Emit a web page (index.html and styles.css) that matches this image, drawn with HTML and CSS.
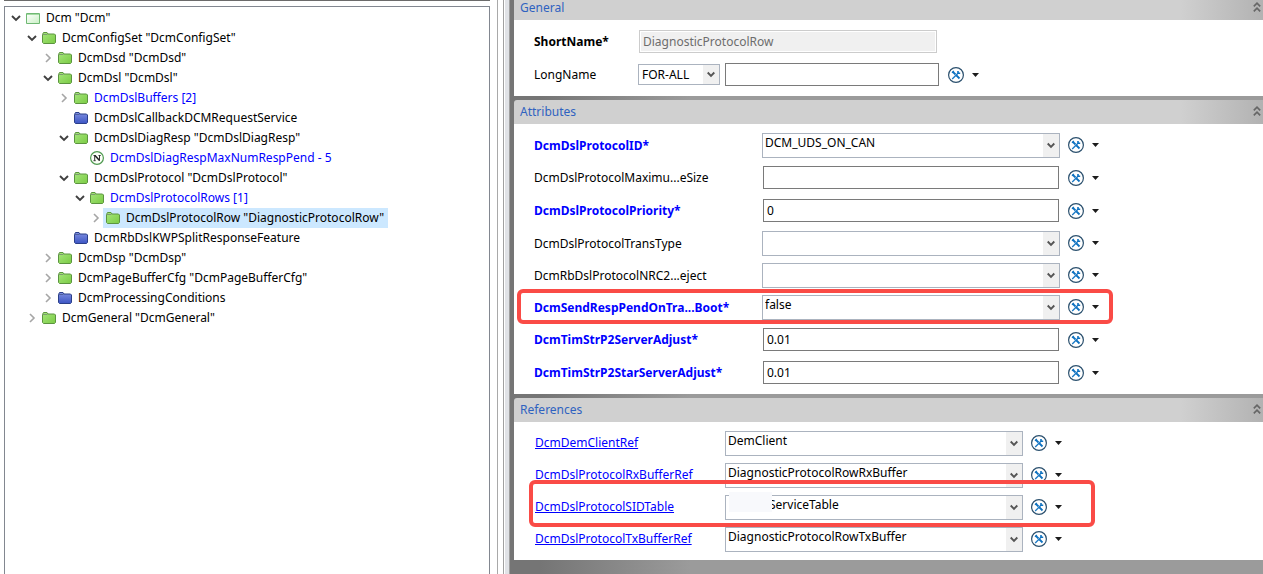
FILE: index.html
```html
<!DOCTYPE html>
<html lang="en">
<head>
<meta charset="utf-8">
<title>Dcm</title>
<link rel="stylesheet" href="styles.css">
</head>
<body>
<svg class="sprite" aria-hidden="true">
  <defs>
    <linearGradient id="green" x1="0" y1="0" x2="1" y2="1"><stop offset="0" stop-color="#a6e67c"/><stop offset="1" stop-color="#7bcb45"/></linearGradient>
    <linearGradient id="blue" x1="0" y1="0" x2="0" y2="1"><stop offset="0" stop-color="#7f8fe0"/><stop offset="1" stop-color="#3c55c4"/></linearGradient>
    <linearGradient id="pale" x1="0" y1="0" x2="1" y2="1"><stop offset="0" stop-color="#ffffff"/><stop offset="1" stop-color="#c9f0c4"/></linearGradient>
  </defs>
  <symbol id="i-green" viewBox="0 0 14 12"><path d="M.5 10.500V2.500L1.500.5H5l1 1.500h6.500l1 1v7.500l-1 1h-11z" fill="url(#green)" stroke="#5c9440"/><path d="M1 2.500h4.500" stroke="#7d9a70"/></symbol>
  <symbol id="i-blue" viewBox="0 0 14 12"><path d="M.5 10.500V2.500L1.500.5H5l1 1.500h6.500l1 1v7.500l-1 1h-11z" fill="url(#blue)" stroke="#2b3f88"/><path d="M1 2.500h4.500" stroke="#4f5f9c"/></symbol>
  <symbol id="i-root" viewBox="0 0 14 12"><path d="M.5 1.500h13v10H.5z" fill="url(#pale)" stroke="#6fb873"/><path d="M1 2.500h12" stroke="#a5dca4"/></symbol>
  <symbol id="i-n" viewBox="0 0 14 14"><circle cx="7" cy="7" r="6.400" fill="#fbfff8" stroke="#4f9a50" stroke-width="1.200"/><path d="M3.500 4.500h2.200M8.500 4.500h2.200M3.500 9.700h2.200M4.700 4.500v5M9.500 4.500v5.200" stroke="#333"/><path d="M5 4.500l4.500 5" stroke="#222" stroke-width="1.500"/></symbol>
  <symbol id="i-open" viewBox="0 0 10 10"><path d="M1 3l4 4 4-4" fill="none" stroke="#404040" stroke-width="1.900"/></symbol>
  <symbol id="i-closed" viewBox="0 0 10 10"><path d="M3 1l4 4-4 4" fill="none" stroke="#a6a6a6" stroke-width="1.600"/></symbol>
  <symbol id="i-drop" viewBox="0 0 8 8"><path d="M.7 2L4 5.300 7.300 2" fill="none" stroke="#555" stroke-width="1.900"/></symbol>
  <symbol id="i-fold" viewBox="0 0 8 10"><path d="M.8 4.300L4 1.200l3.200 3.100M.8 9.300L4 6.200l3.200 3.100" fill="none" stroke="#666" stroke-width="1.700"/></symbol>
  <symbol id="i-tool" viewBox="0 0 16 16"><circle cx="8" cy="8" r="7.400" fill="#fff" stroke="#2b506e" stroke-width="1.200"/><path d="M4.500 4.500l3 3M8 8l3.500 3.500" stroke="#0f72c0" stroke-width="1.800"/><path d="M4.200 12l6-6" stroke="#1b7ac6" stroke-width="1.300"/><path d="M10 4v2.200h2.200" fill="none" stroke="#0f72c0" stroke-width="1.600"/><path d="M4 5.800L5.800 4" stroke="#0f72c0" stroke-width="1.200"/></symbol>
  <symbol id="i-arrow" viewBox="0 0 7 4"><path d="M0 0h7L3.500 4z" fill="#1c1c1c"/></symbol>
</svg>

<div class="app">
  <nav class="side" aria-label="Configuration tree">
    <div class="tree">
      <ul>
        <li><div class="row"><button class="toggle" aria-label="Collapse"><svg><use href="#i-open"/></svg></button><span class="node"><svg><use href="#i-root"/></svg>Dcm "Dcm"</span></div>
          <ul>
            <li><div class="row"><button class="toggle" aria-label="Collapse"><svg><use href="#i-open"/></svg></button><span class="node"><svg><use href="#i-green"/></svg>DcmConfigSet "DcmConfigSet"</span></div>
              <ul>
                <li><div class="row"><button class="toggle" aria-label="Expand"><svg><use href="#i-closed"/></svg></button><span class="node"><svg><use href="#i-green"/></svg>DcmDsd "DcmDsd"</span></div></li>
                <li><div class="row"><button class="toggle" aria-label="Collapse"><svg><use href="#i-open"/></svg></button><span class="node"><svg><use href="#i-green"/></svg>DcmDsl "DcmDsl"</span></div>
                  <ul>
                    <li><div class="row"><button class="toggle" aria-label="Expand"><svg><use href="#i-closed"/></svg></button><span class="node multi"><svg><use href="#i-green"/></svg>DcmDslBuffers [2]</span></div></li>
                    <li><div class="row"><span class="toggle"></span><span class="node"><svg><use href="#i-blue"/></svg>DcmDslCallbackDCMRequestService</span></div></li>
                    <li><div class="row"><button class="toggle" aria-label="Collapse"><svg><use href="#i-open"/></svg></button><span class="node"><svg><use href="#i-green"/></svg>DcmDslDiagResp "DcmDslDiagResp"</span></div>
                      <ul>
                        <li><div class="row"><span class="toggle"></span><span class="node multi"><svg class="round"><use href="#i-n"/></svg>DcmDslDiagRespMaxNumRespPend - 5</span></div></li>
                      </ul>
                    </li>
                    <li><div class="row"><button class="toggle" aria-label="Collapse"><svg><use href="#i-open"/></svg></button><span class="node"><svg><use href="#i-green"/></svg>DcmDslProtocol "DcmDslProtocol"</span></div>
                      <ul>
                        <li><div class="row"><button class="toggle" aria-label="Collapse"><svg><use href="#i-open"/></svg></button><span class="node multi"><svg><use href="#i-green"/></svg>DcmDslProtocolRows [1]</span></div>
                          <ul>
                            <li><div class="row"><button class="toggle" aria-label="Expand"><svg><use href="#i-closed"/></svg></button><span class="node selected"><svg><use href="#i-green"/></svg>DcmDslProtocolRow "DiagnosticProtocolRow"</span></div></li>
                          </ul>
                        </li>
                      </ul>
                    </li>
                    <li><div class="row"><span class="toggle"></span><span class="node"><svg><use href="#i-blue"/></svg>DcmRbDslKWPSplitResponseFeature</span></div></li>
                  </ul>
                </li>
                <li><div class="row"><button class="toggle" aria-label="Expand"><svg><use href="#i-closed"/></svg></button><span class="node"><svg><use href="#i-green"/></svg>DcmDsp "DcmDsp"</span></div></li>
                <li><div class="row"><button class="toggle" aria-label="Expand"><svg><use href="#i-closed"/></svg></button><span class="node"><svg><use href="#i-green"/></svg>DcmPageBufferCfg "DcmPageBufferCfg"</span></div></li>
                <li><div class="row"><button class="toggle" aria-label="Expand"><svg><use href="#i-closed"/></svg></button><span class="node"><svg><use href="#i-blue"/></svg>DcmProcessingConditions</span></div></li>
              </ul>
            </li>
            <li><div class="row"><button class="toggle" aria-label="Expand"><svg><use href="#i-closed"/></svg></button><span class="node"><svg><use href="#i-green"/></svg>DcmGeneral "DcmGeneral"</span></div></li>
          </ul>
        </li>
      </ul>
    </div>
  </nav>

  <div class="splitter"></div>

  <main class="editor">
    <section class="panel">
      <header class="bar"><h2>General</h2><button aria-label="Collapse General"><svg><use href="#i-fold"/></svg></button></header>
      <div class="form general">
        <div class="field"><label class="bold" for="short">ShortName*</label><input class="readonly" id="short" type="text" value="DiagnosticProtocolRow" disabled></div>
        <div class="field"><label for="long">LongName</label><div class="pair"><span class="combo lang"><select aria-label="Language"><option>FOR-ALL</option></select><svg><use href="#i-drop"/></svg></span><input id="long" type="text"></div><button class="tool" aria-label="Tools"><svg class="gear"><use href="#i-tool"/></svg><svg class="arrow"><use href="#i-arrow"/></svg></button></div>
      </div>
    </section>

    <section class="panel">
      <header class="bar"><h2>Attributes</h2><button aria-label="Collapse Attributes"><svg><use href="#i-fold"/></svg></button></header>
      <div class="form attributes">
        <div class="field"><label class="required" for="a1">DcmDslProtocolID*</label><span class="combo"><select id="a1"><option>DCM_UDS_ON_CAN</option></select><svg><use href="#i-drop"/></svg></span><button class="tool" aria-label="Tools"><svg class="gear"><use href="#i-tool"/></svg><svg class="arrow"><use href="#i-arrow"/></svg></button></div>
        <div class="field"><label for="a2">DcmDslProtocolMaximu...eSize</label><input id="a2" type="text"><button class="tool" aria-label="Tools"><svg class="gear"><use href="#i-tool"/></svg><svg class="arrow"><use href="#i-arrow"/></svg></button></div>
        <div class="field"><label class="required" for="a3">DcmDslProtocolPriority*</label><input id="a3" type="text" value="0"><button class="tool" aria-label="Tools"><svg class="gear"><use href="#i-tool"/></svg><svg class="arrow"><use href="#i-arrow"/></svg></button></div>
        <div class="field"><label for="a4">DcmDslProtocolTransType</label><span class="combo"><select id="a4"><option></option></select><svg><use href="#i-drop"/></svg></span><button class="tool" aria-label="Tools"><svg class="gear"><use href="#i-tool"/></svg><svg class="arrow"><use href="#i-arrow"/></svg></button></div>
        <div class="field"><label for="a5">DcmRbDslProtocolNRC2...eject</label><span class="combo"><select id="a5"><option></option></select><svg><use href="#i-drop"/></svg></span><button class="tool" aria-label="Tools"><svg class="gear"><use href="#i-tool"/></svg><svg class="arrow"><use href="#i-arrow"/></svg></button></div>
        <div class="field marked"><label class="required" for="a6">DcmSendRespPendOnTra...Boot*</label><span class="combo"><select id="a6"><option>false</option></select><svg><use href="#i-drop"/></svg></span><button class="tool" aria-label="Tools"><svg class="gear"><use href="#i-tool"/></svg><svg class="arrow"><use href="#i-arrow"/></svg></button></div>
        <div class="field"><label class="required" for="a7">DcmTimStrP2ServerAdjust*</label><input id="a7" type="text" value="0.01"><button class="tool" aria-label="Tools"><svg class="gear"><use href="#i-tool"/></svg><svg class="arrow"><use href="#i-arrow"/></svg></button></div>
        <div class="field"><label class="required" for="a8">DcmTimStrP2StarServerAdjust*</label><input id="a8" type="text" value="0.01"><button class="tool" aria-label="Tools"><svg class="gear"><use href="#i-tool"/></svg><svg class="arrow"><use href="#i-arrow"/></svg></button></div>
      </div>
    </section>

    <section class="panel">
      <header class="bar"><h2>References</h2><button aria-label="Collapse References"><svg><use href="#i-fold"/></svg></button></header>
      <div class="form references">
        <div class="field"><a href="#r1">DcmDemClientRef</a><span class="combo"><select id="r1" aria-label="DcmDemClientRef"><option>DemClient</option></select><svg><use href="#i-drop"/></svg></span><button class="tool" aria-label="Tools"><svg class="gear"><use href="#i-tool"/></svg><svg class="arrow"><use href="#i-arrow"/></svg></button></div>
        <div class="field"><a href="#r2">DcmDslProtocolRxBufferRef</a><span class="combo"><select id="r2" aria-label="DcmDslProtocolRxBufferRef"><option>DiagnosticProtocolRowRxBuffer</option></select><svg><use href="#i-drop"/></svg></span><button class="tool" aria-label="Tools"><svg class="gear"><use href="#i-tool"/></svg><svg class="arrow"><use href="#i-arrow"/></svg></button></div>
        <div class="field marked"><a href="#r3">DcmDslProtocolSIDTable</a><span class="combo masked"><select id="r3" aria-label="DcmDslProtocolSIDTable"><option>ServiceTable</option></select><svg><use href="#i-drop"/></svg></span><button class="tool" aria-label="Tools"><svg class="gear"><use href="#i-tool"/></svg><svg class="arrow"><use href="#i-arrow"/></svg></button></div>
        <div class="field"><a href="#r4">DcmDslProtocolTxBufferRef</a><span class="combo"><select id="r4" aria-label="DcmDslProtocolTxBufferRef"><option>DiagnosticProtocolRowTxBuffer</option></select><svg><use href="#i-drop"/></svg></span><button class="tool" aria-label="Tools"><svg class="gear"><use href="#i-tool"/></svg><svg class="arrow"><use href="#i-arrow"/></svg></button></div>
      </div>
    </section>
  </main>
</div>
</body>
</html>
```
FILE: styles.css
```css
* { box-sizing: border-box; }

body {
  margin: 0;
  background: #fff;
  color: #000;
  overflow: hidden;
}

body, button, input, select {
  font-family: "Noto Sans", "Open Sans", sans-serif;
  font-size: 12px;
}

button {
  padding: 0;
  border: 0;
  background: none;
}

.sprite { position: absolute; width: 0; height: 0; }

.app {
  display: grid;
  grid-template-columns: 498fr 12px 753fr;
  min-height: 100vh;
}

/* Tree */
.side {
  display: flex;
  padding: 0 7px 0 4px;
  border-right: 1px solid #a9a9a9;
}

.tree {
  flex: 1;
  margin-top: 6px;
  padding: 1px 0 0 4px;
  border: 1px solid #828790;
  border-bottom: 0;
  box-shadow: 0 -5px #fff, 0 -6px #6b6b6b;
}

.tree ul { margin: 0; padding: 0; list-style: none; }
.tree ul ul { padding-left: 16px; }

.row { display: flex; height: 20px; }

.toggle {
  display: flex;
  width: 14px;
  align-items: center;
  justify-content: center;
}

.toggle svg { width: 10px; height: 10px; }

.node {
  display: flex;
  gap: 6px;
  align-items: center;
  padding: 0 4px 2px 3px;
  white-space: nowrap;
}

.node svg { width: 14px; height: 12px; margin-top: 2px; }
.node svg.round { height: 14px; }
.multi { color: #0000ff; }
.selected { background: #cce8ff; }

.splitter {
  background: linear-gradient(90deg, #fff 5px, #a0a0a0 5px 6px, #fff 6px 7px, #e0e2e6 7px 11px, #a0a0a0 11px);
}

/* Editor */
.editor {
  display: flex;
  flex-direction: column;
  gap: 4px;
  min-width: 0;
  margin-top: -4px;
  padding-left: 4px;
  background: linear-gradient(90deg, #757575 4%, #9b9b9b 24%);
}

.bar {
  display: flex;
  height: 24px;
  align-items: center;
  justify-content: space-between;
  padding: 0 2px 2px 6px;
  border-radius: 3px 0 0 0;
  background: linear-gradient(90deg, #d0d0d0 89%, #b2b2b2);
}

.bar h2 {
  margin: 0;
  color: #2f62c0;
  font-size: 12px;
  font-weight: 400;
}

.bar svg { display: block; width: 8px; height: 10px; }

.form {
  display: flex;
  flex-direction: column;
  gap: 8px;
  align-items: flex-start;
  padding: 9px 20px;
  background: #fff;
}

.field {
  position: relative;
  display: grid;
  grid-template-columns: 228px 298px auto;
  align-items: center;
}

.general .field { grid-template-columns: 104px 302px auto; }
.references { padding-left: 21px; }
.references .field { grid-template-columns: 190px 298px auto; }

.bold { font-weight: 700; }
.required { color: #0000ff; font-weight: 700; }
a { padding-bottom: 2px; color: #0000ff; justify-self: start; }

input {
  min-width: 0;
  height: 23px;
  margin: 1px;
  padding: 0 3px;
  border: 1px solid #7a7a7a;
  border-radius: 0;
  background: #fff;
  color: #000;
}

.readonly {
  width: 298px;
  border-color: #ccc;
  background: #f0f0f0;
  box-shadow: inset 0 0 0 1px #fff;
  color: #6d6d6d;
}

.pair { display: flex; gap: 4px; align-items: center; }
.pair input { flex: 1; }

.combo { display: grid; height: 24px; }
.combo > * { grid-area: 1 / 1; }

.combo select {
  width: 100%;
  margin: 0;
  padding: 0 20px 6px 2px;
  border: 1px solid #abb3bf;
  border-radius: 0;
  background: #fff;
  color: #000;
  appearance: none;
}

.combo svg {
  width: 16px;
  height: calc(100% - 2px);
  margin: 1px;
  padding: 7px 4px;
  justify-self: end;
  background: #f0f0f0;
  pointer-events: none;
}

.combo.lang { width: 82px; height: 21px; }
.lang select { padding: 0 18px 0 3px; }
.lang svg { padding: 5px 4px; }

.tool {
  display: flex;
  gap: 8px;
  align-items: center;
  padding-left: 8px;
}

.gear { width: 16px; height: 16px; }
.arrow { width: 7px; height: 4px; }

.masked { position: relative; }
.masked select { padding-left: 43px; }
.masked::after {
  content: "";
  position: absolute;
  top: -3px;
  left: 4px;
  width: 43px;
  height: 20px;
  background: #f8f9fc;
}

/* Red callouts over the highlighted fields */
.marked::after {
  content: "";
  position: absolute;
  z-index: 1;
  inset: -6px -14px -5px -17px;
  border: 4px solid #fa4b46;
  border-radius: 6px;
  pointer-events: none;
}

.references .marked::after { inset: -15px -33px -8px -6px; }
```
